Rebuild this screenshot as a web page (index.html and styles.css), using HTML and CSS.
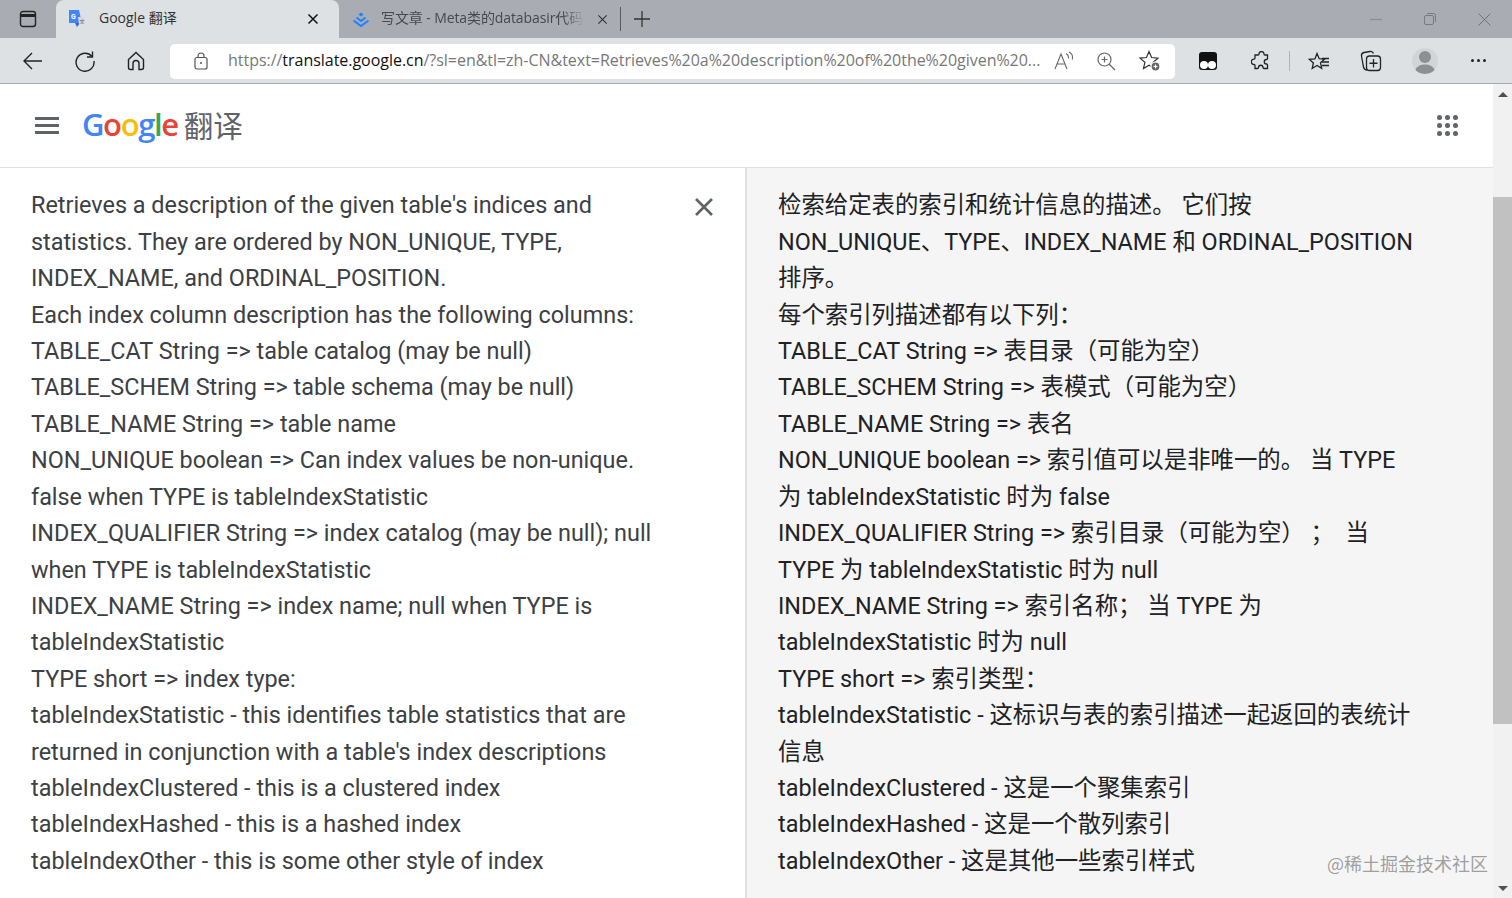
FILE: index.html
```html
<!DOCTYPE html>
<html lang="zh-CN">
<head>
    <meta charset="UTF-8">
    <title>Google 翻译</title>
    <link rel="stylesheet" href="styles.css">
</head>
<body>
    <div class="tabstrip">
        <div class="tab-toggle">
            <svg width="18" height="18" viewBox="0 0 18 18" fill="none" stroke="#222" stroke-width="1.4"><rect x="1.5" y="1.5" width="15" height="15" rx="2.5"/><path d="M1.5 5.5h15" stroke-width="3"/></svg>
        </div>
        <div class="tab tab-active">
            <svg class="favicon" width="18" height="20" viewBox="0 0 18 20"><path d="M1 1h10l3 13H1z" fill="#4285f4"/><path d="M7 14h5l-3 4z" fill="#3367d6"/><path d="M10 8h7v7h-6z" fill="#d8dadd"/><text x="3" y="10" class="fav-g">G</text><text x="11.5" y="14" class="fav-a">文</text></svg>
            <span class="tab-title">Google 翻译</span>
            <svg class="tab-close" width="12" height="12" viewBox="0 0 12 12" stroke="#111" stroke-width="1.5"><path d="M1.5 1.5l9 9M10.5 1.5l-9 9"/></svg>
        </div>
        <div class="tab">
            <svg class="favicon" width="18" height="16" viewBox="0 0 18 16" fill="none" stroke="#1e80ff" stroke-width="2"><path d="M9 1.5l2.5 2L9 5.5l-2.5-2z" fill="#1e80ff" stroke="none"/><path d="M4.5 6.5L9 10l4.500-3.500"/><path d="M1.500 9.500L9 15l7.500-5.500"/></svg>
            <span class="tab-title tab-title-faded">写文章 - Meta类的databasir代码</span>
            <svg class="tab-close" width="11" height="11" viewBox="0 0 12 12" stroke="#333" stroke-width="1.3"><path d="M1.500 1.500l9 9M10.500 1.500l-9 9"/></svg>
        </div>
        <div class="tab-sep"></div>
        <svg class="new-tab" width="16" height="16" viewBox="0 0 16 16" stroke="#333" stroke-width="1.300"><path d="M8 0v16M0 8h16"/></svg>
        <div class="window-controls">
            <svg width="12" height="12" viewBox="0 0 12 12" stroke="#8a8d91" stroke-width="1.200"><path d="M0 6.500h12"/></svg>
            <svg width="12" height="12" viewBox="0 0 12 12" fill="none" stroke="#777a7e" stroke-width="1"><rect x=".5" y="2.500" width="9" height="9" rx="1.500"/><path d="M3 .5h6.500a2 2 0 0 1 2 2V9"/></svg>
            <svg width="13" height="13" viewBox="0 0 13 13" stroke="#6d7074" stroke-width="1"><path d="M.5.5l12 12M12.500.5l-12 12"/></svg>
        </div>
    </div>

    <div class="toolbar">
        <div class="nav-icons">
            <svg width="22" height="20" viewBox="0 0 22 20" fill="none" stroke="#222" stroke-width="1.400"><path d="M20 10H2M10 2l-8 8 8 8"/></svg>
            <svg width="22" height="22" viewBox="0 0 22 22" fill="none" stroke="#222" stroke-width="1.400"><path d="M18 6.500A9 9 0 1 0 20 11"/><path d="M18.500 1.500v5.500H13"/></svg>
            <svg width="20" height="20" viewBox="0 0 20 20" fill="none" stroke="#222" stroke-width="1.400"><path d="M2.500 8.500L10 1.500l7.500 7v8a2 2 0 0 1-2 2H13v-6a3 3 0 0 0-6 0v6H4.500a2 2 0 0 1-2-2z"/></svg>
        </div>
        <div class="address">
            <svg class="lock" width="14" height="18" viewBox="0 0 14 18" fill="none" stroke="#555" stroke-width="1.200"><rect x="1" y="5.500" width="12" height="11.500" rx="2"/><path d="M4 5.500V4a3 3 0 0 1 6 0v1.500"/><circle cx="7" cy="11" r="1" fill="#555" stroke="none"/></svg>
            <div class="url"><span class="url-dim">https://</span>translate.google.cn<span class="url-dim">/?sl=en&amp;tl=zh-CN&amp;text=Retrieves%20a%20description%20of%20the%20given%20...</span></div>
            <div class="address-icons">
                <svg width="20" height="20" viewBox="0 0 20 20" fill="none" stroke="#666" stroke-width="1.100"><path d="M1 18L7 3l6 15M3.500 13h7"/><path d="M12 2.500c2 1 2.800 2.800 2.500 5M15 1c3 1.500 4 4.500 3.200 7.500"/></svg>
                <svg width="19" height="19" viewBox="0 0 19 19" fill="none" stroke="#666" stroke-width="1.200"><circle cx="7.500" cy="7.500" r="6.500"/><path d="M12 12l6 6M7.500 4.500v6M4.500 7.500h6"/></svg>
                <svg width="22" height="22" viewBox="0 0 22 22" fill="none" stroke="#333" stroke-width="1.200"><path d="M10 1.500l2.600 6 6.400.6-4.800 4.200 1.300 6.300L10 15.300l-5.500 3.300 1.400-6.300L1 8.100l6.500-.6z"/><circle cx="16.500" cy="16.500" r="4.500" fill="#666" stroke="#fff"/><path d="M16.500 14.500v4M14.500 16.500h4" stroke="#fff"/></svg>
            </div>
        </div>
        <div class="ext-icons">
            <svg class="ext-tampermonkey" width="18" height="18" viewBox="0 0 18 18"><rect width="18" height="18" rx="3" fill="#111"/><circle cx="5" cy="13" r="4" fill="#fff"/><circle cx="13" cy="13" r="4" fill="#fff"/></svg>
            <svg class="ext-puzzle" width="20" height="20" viewBox="0 0 20 20" fill="none" stroke="#222" stroke-width="1.300"><path d="M8 3a2.500 2.500 0 0 1 5 0c0 .6.400 1 1 1h2.500v3.500c0 .6-.400 1-1 1a2.200 2.200 0 0 0 0 4.500c.6 0 1 .4 1 1V17.500H13a1 1 0 0 1-1-1 2.200 2.200 0 0 0-4.500 0 1 1 0 0 1-1 1H4v-3a1 1 0 0 0-1-1 2.700 2.700 0 0 1 0-5.400 1 1 0 0 0 1-1V4h3c.6 0 1-.4 1-1z"/></svg>
            <div class="toolbar-sep"></div>
            <svg class="ext-fav" width="22" height="20" viewBox="0 0 22 20" fill="none" stroke="#222" stroke-width="1.300"><path d="M9 1.500l2.200 5.200 5.300.5-4 3.600 1.200 5.500L9 13.500l-4.800 3 1.200-5.500-4-3.600 5.500-.5z" transform="translate(0 1)"/><path d="M14 7.500h7M14 11h7M14 14.500h7"/></svg>
            <svg class="ext-collect" width="22" height="22" viewBox="0 0 22 22" fill="none" stroke="#222" stroke-width="1.300"><path d="M7 20c-2 0-3-1-3.500-3L1.500 6c-.3-2 .5-3 2.500-3.500l6-1c2-.3 3 .5 3.500 2"/><rect x="6.500" y="6" width="14" height="14.500" rx="3" fill="#dee1e4"/><path d="M13.500 9v8.500M9.500 13.250h8"/></svg>
            <div class="avatar">
                <svg width="26" height="26" viewBox="0 0 26 26" fill="#8e8f90"><circle cx="13" cy="9" r="6"/><path d="M3 24c0-5 5-7.500 10-7.500S23 19 23 24c-5 2.500-15 2.500-20 0z"/></svg>
            </div>
            <div class="more"><i></i><i></i><i></i></div>
        </div>
    </div>

    <div class="page">
        <div class="main">
            <header class="gt-header">
                <div class="hamburger"><i></i><i></i><i></i></div>
                <div class="logo">
                    <span class="logo-word"><span class="c-blue">G</span><span class="c-red">o</span><span class="c-yellow">o</span><span class="c-blue">g</span><span class="c-green">l</span><span class="c-red">e</span></span>
                    <span class="logo-product">翻译</span>
                </div>
                <div class="apps">
                    <i></i><i></i><i></i><i></i><i></i><i></i><i></i><i></i><i></i>
                </div>
            </header>

            <div class="panels">
                <section class="panel panel-source">
                    <div class="source-text">
                        <div>Retrieves a description of the given table's indices and</div>
                        <div>statistics. They are ordered by NON_UNIQUE, TYPE,</div>
                        <div>INDEX_NAME, and ORDINAL_POSITION.</div>
                        <div>Each index column description has the following columns:</div>
                        <div>TABLE_CAT String =&gt; table catalog (may be null)</div>
                        <div>TABLE_SCHEM String =&gt; table schema (may be null)</div>
                        <div>TABLE_NAME String =&gt; table name</div>
                        <div>NON_UNIQUE boolean =&gt; Can index values be non-unique.</div>
                        <div>false when TYPE is tableIndexStatistic</div>
                        <div>INDEX_QUALIFIER String =&gt; index catalog (may be null); null</div>
                        <div>when TYPE is tableIndexStatistic</div>
                        <div>INDEX_NAME String =&gt; index name; null when TYPE is</div>
                        <div>tableIndexStatistic</div>
                        <div>TYPE short =&gt; index type:</div>
                        <div>tableIndexStatistic - this identifies table statistics that are</div>
                        <div>returned in conjunction with a table's index descriptions</div>
                        <div>tableIndexClustered - this is a clustered index</div>
                        <div>tableIndexHashed - this is a hashed index</div>
                        <div>tableIndexOther - this is some other style of index</div>
                    </div>
                    <svg class="clear-btn" width="18" height="18" viewBox="0 0 18 18" stroke="#5f6368" stroke-width="2.600"><path d="M1 1l16 16M17 1L1 17"/></svg>
                </section>
                <section class="panel panel-target">
                    <div>检索给定表的索引和统计信息的描述。 它们按</div>
                    <div>NON_UNIQUE、TYPE、INDEX_NAME 和 ORDINAL_POSITION</div>
                    <div>排序。</div>
                    <div>每个索引列描述都有以下列：</div>
                    <div>TABLE_CAT String =&gt; 表目录（可能为空）</div>
                    <div>TABLE_SCHEM String =&gt; 表模式（可能为空）</div>
                    <div>TABLE_NAME String =&gt; 表名</div>
                    <div>NON_UNIQUE boolean =&gt; 索引值可以是非唯一的。 当 TYPE</div>
                    <div>为 tableIndexStatistic 时为 false</div>
                    <div>INDEX_QUALIFIER String =&gt; 索引目录（可能为空）&nbsp;； &nbsp;当</div>
                    <div>TYPE 为 tableIndexStatistic 时为 null</div>
                    <div>INDEX_NAME String =&gt; 索引名称； 当 TYPE 为</div>
                    <div>tableIndexStatistic 时为 null</div>
                    <div>TYPE short =&gt; 索引类型：</div>
                    <div>tableIndexStatistic - 这标识与表的索引描述一起返回的表统计</div>
                    <div>信息</div>
                    <div>tableIndexClustered - 这是一个聚集索引</div>
                    <div>tableIndexHashed - 这是一个散列索引</div>
                    <div>tableIndexOther - 这是其他一些索引样式</div>
                </section>
            </div>
        </div>
        <div class="scrollbar">
            <div class="arrow-up"></div>
            <div class="thumb"></div>
            <div class="arrow-down"></div>
        </div>
    </div>
    <div class="watermark">@稀土掘金技术社区</div>
</body>
</html>
```

FILE: styles.css
```css
:root {
    --strip: #a9adb3;
    --bar: #dee1e4;
    --line: #e0e0e0;
    --text: #3c4043;
    --cjk: "Noto Sans CJK SC", sans-serif;
}

html,
body {
    margin: 0;
    height: 100%;
    overflow: hidden;
}

body {
    position: relative;
    display: flex;
    flex-direction: column;
    font-family: Roboto, "Noto Sans CJK SC", sans-serif;
    background: #fff;
}

svg {
    display: block;
    flex: none;
}

/* browser chrome */
.tabstrip {
    height: 38px;
    display: flex;
    align-items: center;
    background: var(--strip);
    flex: none;
}

.tab-toggle {
    width: 56px;
    padding-left: 19px;
    box-sizing: border-box;
}

.tab {
    height: 38px;
    display: flex;
    align-items: center;
    box-sizing: border-box;
}

.tab-active {
    width: 283px;
    padding: 0 20px 0 12px;
    background: var(--bar);
    border-radius: 8px 8px 0 0;
}

.tab:not(.tab-active) {
    width: 281px;
    padding: 0 12px 0 13px;
}

.favicon {
    margin-right: 13px;
}

.tab:not(.tab-active) .favicon {
    margin-right: 11px;
}

.fav-g {
    font: bold 7px Roboto, sans-serif;
    fill: #fff;
}

.fav-a {
    font: 5px var(--cjk);
    fill: #666;
}

.tab-title {
    flex: 1;
    font-family: "Open Sans", var(--cjk);
    font-size: 14px;
    line-height: 20px;
    margin-top: -2px;
    color: #333;
    white-space: nowrap;
    overflow: hidden;
}

.tab-title-faded {
    color: #45484c;
    letter-spacing: -0.1px;
    margin-right: 13px;
    -webkit-mask-image: linear-gradient(to right, #000 90%, transparent);
    mask-image: linear-gradient(to right, #000 90%, transparent);
}

.tab-sep {
    width: 1px;
    height: 24px;
    background: #55585c;
}

.new-tab {
    margin-left: 13px;
}

.window-controls {
    margin-left: auto;
    display: flex;
    align-items: center;
    gap: 42px;
    padding-right: 21px;
}

.toolbar {
    height: 45px;
    flex: none;
    display: flex;
    align-items: center;
    background: var(--bar);
    border-bottom: 1px solid #a8abae;
    box-sizing: content-box;
}

.nav-icons {
    width: 170px;
    padding-left: 22px;
    box-sizing: border-box;
    display: flex;
    align-items: center;
    gap: 30px;
}

.address {
    width: 1005px;
    height: 35px;
    margin-top: 1px;
    background: #fff;
    border-radius: 5px;
    display: flex;
    align-items: center;
    padding-left: 24px;
    box-sizing: border-box;
}

.lock {
    margin-right: 20px;
}

.url {
    width: 813px;
    margin-top: -2px;
    font-family: "Open Sans", sans-serif;
    font-size: 16px;
    letter-spacing: -0.03px;
    color: #111;
    white-space: nowrap;
    overflow: hidden;
}

.url-dim {
    color: #777;
}

.address-icons {
    display: flex;
    align-items: center;
    gap: 23px;
    margin-left: 13px;
}

.ext-icons {
    display: flex;
    align-items: center;
    flex: 1;
}

.ext-tampermonkey {
    margin-left: 24px;
}

.ext-puzzle {
    margin-left: 34px;
}

.toolbar-sep {
    width: 1px;
    height: 20px;
    background: #b0b3b6;
    margin-left: 18px;
}

.ext-fav {
    margin-left: 18px;
}

.ext-collect {
    margin-left: 30px;
}

.avatar {
    width: 26px;
    height: 26px;
    margin-left: 30px;
    border-radius: 50%;
    background: #d2d4d6;
    overflow: hidden;
}

.more {
    display: flex;
    gap: 3px;
    margin-left: 33px;
}

.more i {
    width: 3px;
    height: 3px;
    border-radius: 50%;
    background: #222;
}

/* page */
.page {
    flex: 1;
    min-height: 0;
    display: flex;
}

.main {
    flex: 1;
    min-width: 0;
    display: flex;
    flex-direction: column;
}

.gt-header {
    height: 83px;
    flex: none;
    display: flex;
    align-items: center;
    padding: 0 35px 0 35px;
    border-bottom: 1px solid var(--line);
    box-sizing: content-box;
}

.hamburger {
    display: flex;
    flex-direction: column;
    gap: 4px;
    width: 24px;
}

.hamburger i {
    height: 3px;
    background: #5f6368;
}

.logo {
    display: flex;
    align-items: center;
    margin-left: 23px;
    margin-top: -3px;
}

.logo-word {
    font-family: "Open Sans", sans-serif;
    font-size: 31px;
    font-weight: 600;
    letter-spacing: -1.4px;
}

.c-blue { color: #4285f4; }
.c-red { color: #ea4335; }
.c-yellow { color: #fbbc05; }
.c-green { color: #34a853; }

.logo-product {
    font-family: var(--cjk);
    font-size: 29.5px;
    color: #5f6368;
    margin-left: 6px;
}

.apps {
    margin-left: auto;
    display: grid;
    grid-template-columns: repeat(3, 5px);
    gap: 3px;
}

.apps i {
    width: 5px;
    height: 5px;
    border-radius: 50%;
    background: #5f6368;
}

.panels {
    flex: 1;
    min-height: 0;
    display: flex;
}

.panel {
    font-size: 23.4px;
    line-height: 36.4px;
    white-space: nowrap;
    padding-top: 19.45px;
    box-sizing: border-box;
    overflow: hidden;
}

.panel-source {
    position: relative;
    width: 745px;
    padding-left: 31px;
    color: var(--text);
}

.clear-btn {
    position: absolute;
    left: 695px;
    top: 30px;
}

.panel-target {
    flex: 1;
    padding-left: 31px;
    background: #f5f5f5;
    border-left: 2px solid var(--line);
    color: #202124;
}

/* scrollbar */
.scrollbar {
    width: 19px;
    flex: none;
    display: flex;
    flex-direction: column;
    align-items: center;
    background: #f1f1f1;
}

.arrow-up {
    margin-top: 8px;
    border: 5px solid transparent;
    border-top: 0;
    border-bottom-color: #505050;
}

.thumb {
    width: 100%;
    height: 527px;
    margin-top: 100px;
    background: #c1c1c1;
}

.arrow-down {
    margin-top: auto;
    margin-bottom: 7px;
    border: 5px solid transparent;
    border-bottom: 0;
    border-top-color: #505050;
}

.watermark {
    position: absolute;
    right: 24px;
    bottom: 22px;
    font-family: var(--cjk);
    font-size: 18px;
    line-height: 26px;
    color: rgba(120, 120, 120, 0.7);
}
```
